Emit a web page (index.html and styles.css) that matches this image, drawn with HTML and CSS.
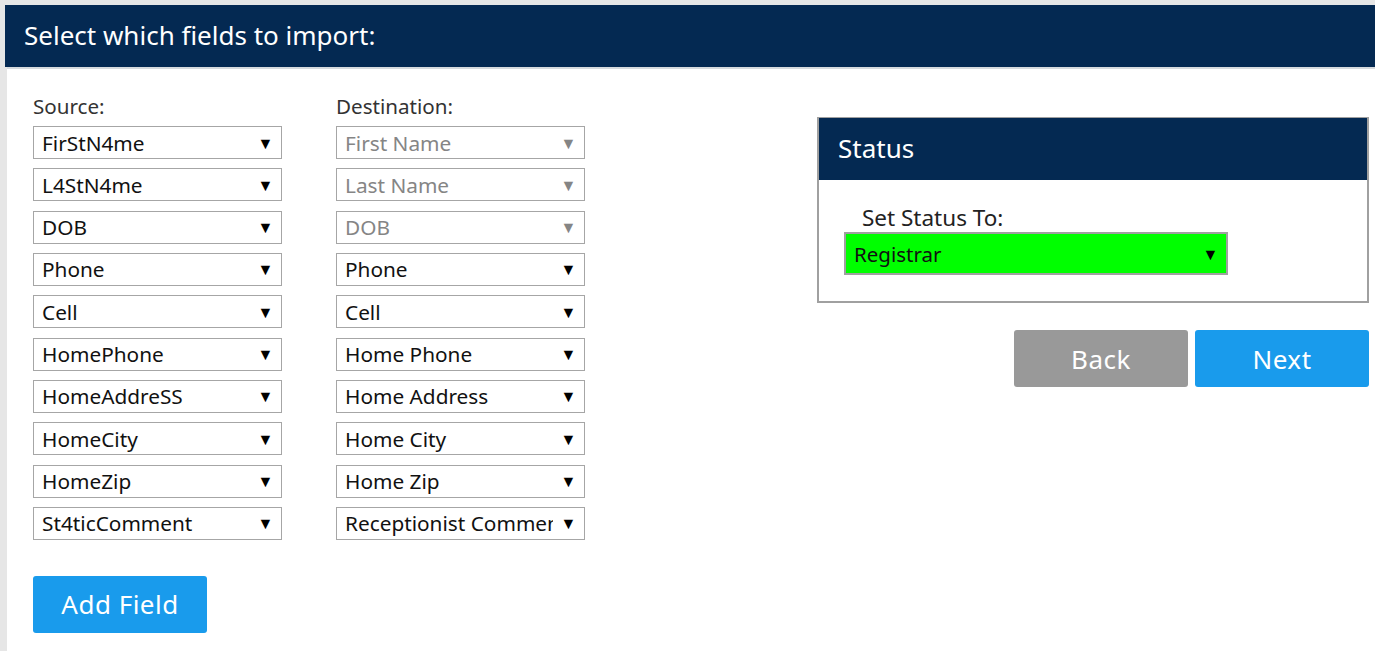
FILE: index.html
```html
<!DOCTYPE html>
<html>
<head>
<meta charset="utf-8">
<link rel="stylesheet" href="styles.css">
</head>
<body>
<div class="page">
  <div class="page-header">Select which fields to import:</div>
  <div class="content">
    <div class="mapping">
      <div class="column">
        <div class="col-label">Source:</div>
        <div class="sel"><span class="sel-text">FirStN4me</span><span class="arrow">▼</span></div>
        <div class="sel"><span class="sel-text">L4StN4me</span><span class="arrow">▼</span></div>
        <div class="sel"><span class="sel-text">DOB</span><span class="arrow">▼</span></div>
        <div class="sel"><span class="sel-text">Phone</span><span class="arrow">▼</span></div>
        <div class="sel"><span class="sel-text">Cell</span><span class="arrow">▼</span></div>
        <div class="sel"><span class="sel-text">HomePhone</span><span class="arrow">▼</span></div>
        <div class="sel"><span class="sel-text">HomeAddreSS</span><span class="arrow">▼</span></div>
        <div class="sel"><span class="sel-text">HomeCity</span><span class="arrow">▼</span></div>
        <div class="sel"><span class="sel-text">HomeZip</span><span class="arrow">▼</span></div>
        <div class="sel"><span class="sel-text">St4ticComment</span><span class="arrow">▼</span></div>
        <button class="btn btn-blue add-btn">Add Field</button>
      </div>
      <div class="column">
        <div class="col-label">Destination:</div>
        <div class="sel disabled"><span class="sel-text">First Name</span><span class="arrow">▼</span></div>
        <div class="sel disabled"><span class="sel-text">Last Name</span><span class="arrow">▼</span></div>
        <div class="sel disabled"><span class="sel-text">DOB</span><span class="arrow">▼</span></div>
        <div class="sel"><span class="sel-text">Phone</span><span class="arrow">▼</span></div>
        <div class="sel"><span class="sel-text">Cell</span><span class="arrow">▼</span></div>
        <div class="sel"><span class="sel-text">Home Phone</span><span class="arrow">▼</span></div>
        <div class="sel"><span class="sel-text">Home Address</span><span class="arrow">▼</span></div>
        <div class="sel"><span class="sel-text">Home City</span><span class="arrow">▼</span></div>
        <div class="sel"><span class="sel-text">Home Zip</span><span class="arrow">▼</span></div>
        <div class="sel"><span class="sel-text">Receptionist Comments</span><span class="arrow">▼</span></div>
      </div>
    </div>
    <div class="side">
      <div class="status-panel">
        <div class="status-header">Status</div>
        <div class="status-body">
          <div class="status-label">Set Status To:</div>
          <div class="status-select"><span class="sel-text">Registrar</span><span class="arrow">▼</span></div>
        </div>
      </div>
      <div class="nav-buttons">
        <button class="btn btn-gray">Back</button>
        <button class="btn btn-blue">Next</button>
      </div>
    </div>
  </div>
</div>
</body>
</html>
```
FILE: styles.css
```css
html, body {
  margin: 0;
  padding: 0;
}
body {
  background: #e6e6e6;
  font-family: "Noto Sans", "Open Sans", sans-serif;
  color: #222;
  height: 651px;
  overflow: hidden;
}
.page {
  padding: 5px 0 0 5px;
}
.page-header {
  background: #042952;
  color: #fff;
  height: 62px;
  line-height: 60px;
  font-size: 26px;
  padding-left: 19px;
  box-sizing: border-box;
}
.content {
  background: #fff;
  border-top: 2px solid #d6dade;
  margin-left: 2px;
  display: flex;
  height: 600px;
  padding: 23px 6px 0 26px;
  box-sizing: border-box;
}
.mapping {
  display: flex;
  gap: 54px;
}
.column {
  width: 249px;
  display: flex;
  flex-direction: column;
}
.col-label {
  font-size: 20.6px;
  line-height: 29px;
  height: 29px;
  margin-bottom: 5px;
  color: #333;
}
.sel {
  height: 33px;
  margin-bottom: 9.33px;
  border: 1px solid #a6a6a6;
  box-sizing: border-box;
  display: flex;
  align-items: center;
  padding: 0 0 0 8px;
  font-size: 20.8px;
  color: #111;
  background: #fff;
}
.sel-text {
  flex: 1;
  min-width: 0;
  white-space: nowrap;
  overflow: hidden;
  line-height: 31px;
  padding-top: 1px;
}
.arrow {
  flex: 0 0 31px;
  text-align: center;
  font-size: 16px;
  line-height: 20px;
  color: #000;
}
.sel.disabled {
  color: #858585;
}
.sel.disabled .arrow {
  color: #858585;
}
.btn {
  border: none;
  border-radius: 3px;
  color: #fff;
  font-family: "Noto Sans", "Open Sans", sans-serif;
  font-size: 26px;
  letter-spacing: 0.5px;
  height: 57px;
  width: 174px;
  padding: 0;
  cursor: pointer;
}
.btn-blue {
  background: #199bec;
}
.btn-gray {
  background: #999999;
}
.add-btn {
  margin-top: 26.7px;
}
.side {
  margin-left: auto;
  width: 552px;
  padding-top: 25px;
  display: flex;
  flex-direction: column;
}
.status-panel {
  border: 2px solid #a0a0a0;
  border-top-width: 1px;
  height: 186px;
  box-sizing: border-box;
}
.status-header {
  background: #042952;
  color: #fff;
  height: 62px;
  line-height: 61px;
  font-size: 26px;
  padding-left: 19px;
  box-sizing: border-box;
}
.status-body {
  padding: 24px 0 0 25px;
}
.status-label {
  font-size: 22.5px;
  line-height: 28px;
  padding-left: 18px;
  color: #222;
}
.status-select {
  width: 384px;
  height: 43px;
  border: 2px solid #a0a0a0;
  background: #00ff00;
  box-sizing: border-box;
  display: flex;
  align-items: center;
  padding: 0 0 0 8px;
  font-size: 20.5px;
  color: #111;
}
.status-select .arrow {
  flex-basis: 31px;
}
.nav-buttons {
  display: flex;
  justify-content: flex-end;
  gap: 7px;
  margin-top: 27px;
}
```
